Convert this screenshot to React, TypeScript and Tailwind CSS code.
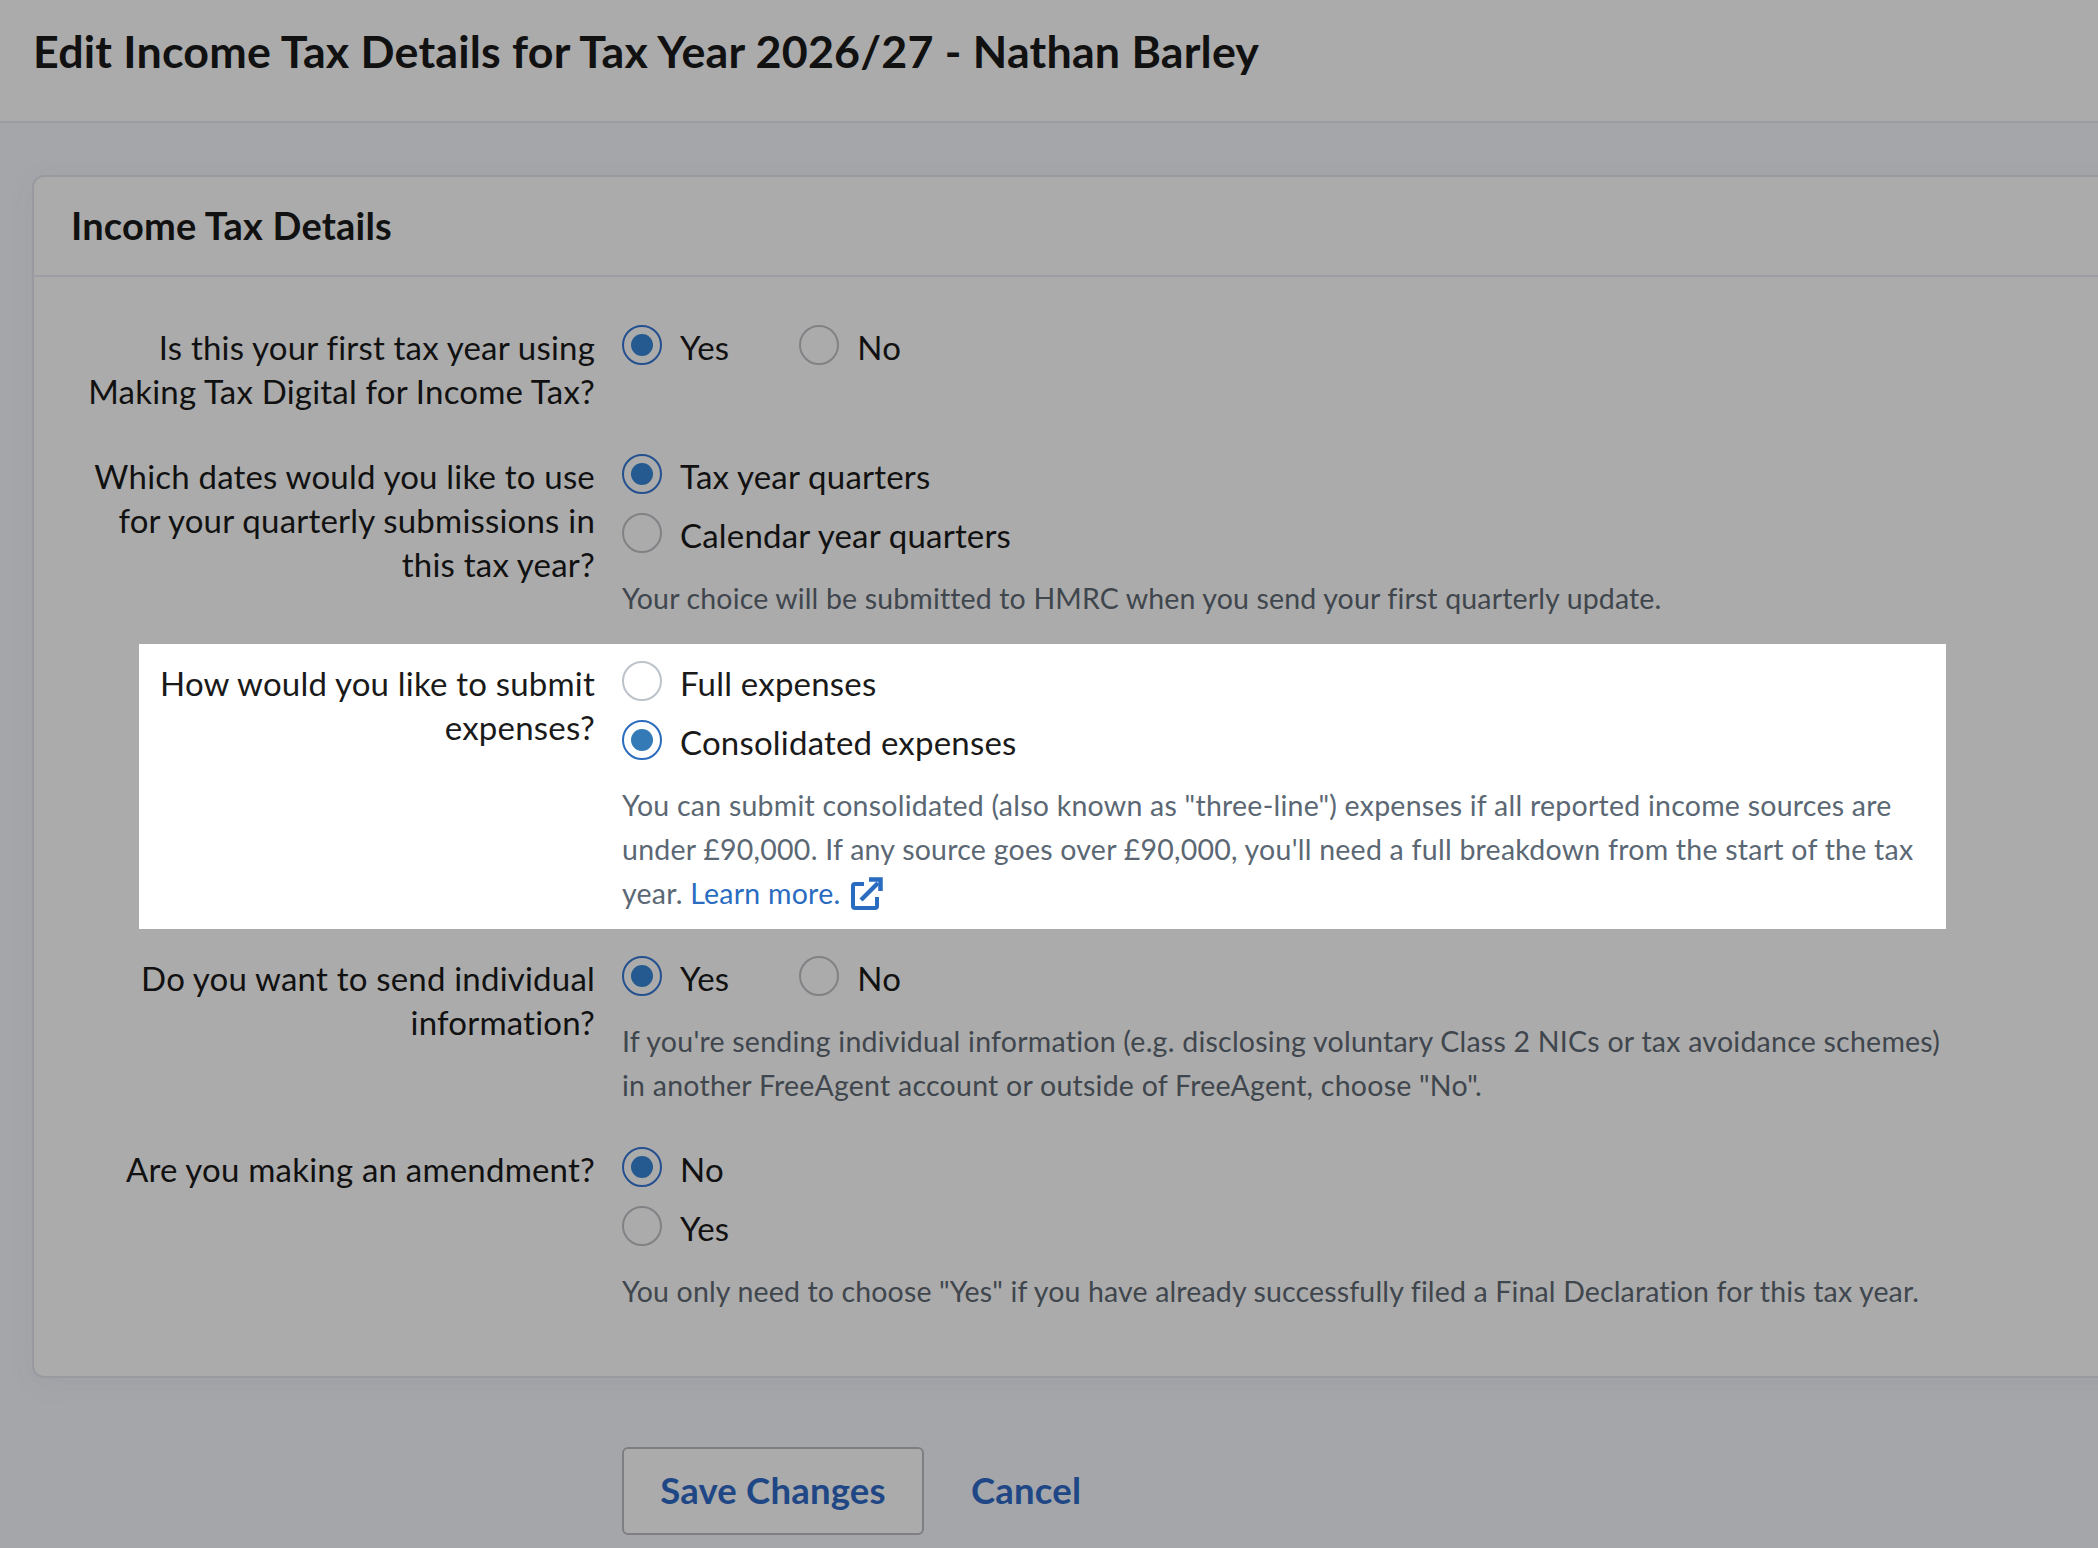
const font = "font-['Lato','Liberation_Sans',sans-serif]";

function Radio({ checked, lit, label, className = "" }: { checked?: boolean; lit?: boolean; label: string; className?: string }) {
  const ring = checked
    ? lit
      ? "border-[#2b6cbc]"
      : "border-[#24508f]"
    : lit
      ? "border-[#bcc3cb]"
      : "border-[#808285]";
  const dot = lit ? "bg-[#337ab7]" : "bg-[#245a90]";
  return (
    <label className={`flex h-[44px] items-center whitespace-nowrap ${className}`}>
      <span className={`-mt-[5px] flex size-[40px] shrink-0 items-center justify-center rounded-full border-[2.5px] ${ring} ${lit ? "bg-white" : ""}`}>
        {checked && <span className={`size-[22px] rounded-full ${dot}`} />}
      </span>
      <span className="ml-[18px]">{label}</span>
    </label>
  );
}

function Help({ lit, wide, children }: { lit?: boolean; wide?: boolean; children: React.ReactNode }) {
  return (
    <p className={`whitespace-nowrap text-[28.5px] ${wide ? "tracking-[0.24px]" : "tracking-[0.15px]"} ${lit ? "text-[#5b6874]" : "text-[#3f464d]"}`}>
      {children}
    </p>
  );
}

function Row({ label, lit, className = "", children }: { label: React.ReactNode; lit?: boolean; className?: string; children: React.ReactNode }) {
  return (
    <div className={`ml-[105px] flex w-[1807px] ${lit ? "bg-white text-[#1a1a1a]" : ""} ${className}`}>
      <div className="flex w-[456px] shrink-0 justify-end">
        <div className="shrink-0 whitespace-nowrap text-right">{label}</div>
      </div>
      <div className="ml-[27px]">{children}</div>
    </div>
  );
}

function ExternalIcon() {
  return (
    <svg viewBox="0 0 32 33" className="ml-[11px] inline-block h-[33px] w-[32px] align-[-6px]" fill="none" stroke="#2a6cc0" strokeWidth="4">
      <path d="M13 7H4a2 2 0 0 0-2 2v20a2 2 0 0 0 2 2h20a2 2 0 0 0 2-2v-9" />
      <path d="M10 23 27 6" strokeWidth="4.5" />
      <path d="M18 2.5h11.5V14" strokeWidth="4.5" />
    </svg>
  );
}

export default function App() {
  return (
    <div className={`h-[1548px] w-[2098px] overflow-hidden bg-[#a4a6aa] text-[33px] leading-[44px] tracking-[0.2px] text-[#111] ${font}`}>
      <header className="flex h-[123px] items-start border-b-2 border-[#9a9ca3] bg-[#ababab] pl-[33px] pt-[21px]">
        <h1 className="text-[44.8px] font-bold leading-[60px] text-[#111]">Edit Income Tax Details for Tax Year 2026/27 - Nathan Barley</h1>
      </header>

      <main className="pl-[32px] pt-[52px]">
        <section className="w-[2200px] rounded-[12px] border-2 border-[#989aa0] bg-[#ababab] pb-[63px] shadow-[0_6px_30px_rgba(80,90,110,0.06)]">
          <div className="flex h-[100px] items-center border-b-2 border-[#9c9ea3] pl-[37px]">
            <h2 className="-mt-[2px] text-[38px] font-bold text-[#111]">Income Tax Details</h2>
          </div>

          <Row className="mt-[48px]" label={<>Is this your first tax year using<br />Making Tax Digital for Income Tax?</>}>
            <div className="flex">
              <Radio checked label="Yes" className="mr-[70px]" />
              <Radio label="No" />
            </div>
          </Row>

          <Row className="mt-[41px]" label={<>Which dates would you like to use<br />for your quarterly submissions in<br />this tax year?</>}>
            <Radio checked label="Tax year quarters" />
            <Radio label="Calendar year quarters" className="mt-[15px]" />
            <div className="mt-[19px]">
              <Help>Your choice will be submitted to HMRC when you send your first quarterly update.</Help>
            </div>
          </Row>

          <Row lit className="mt-[24px] pb-[14px] pt-[17px]" label={<>How would you like to submit<br />expenses?</>}>
            <Radio lit label="Full expenses" />
            <Radio lit checked label="Consolidated expenses" className="mt-[15px]" />
            <div className="mt-[19px]">
              <Help lit wide>
                You can submit consolidated (also known as "three-line") expenses if all reported income sources are<br />
                under £90,000. If any source goes over £90,000, you'll need a full breakdown from the start of the tax<br />
                year. <a className="text-[#2a6cc0]">Learn more.<ExternalIcon /></a>
              </Help>
            </div>
          </Row>

          <Row className="mt-[27px]" label={<>Do you want to send individual<br />information?</>}>
            <div className="flex">
              <Radio checked label="Yes" className="mr-[70px]" />
              <Radio label="No" />
            </div>
            <div className="mt-[19px]">
              <Help wide>
                If you're sending individual information (e.g. disclosing voluntary Class 2 NICs or tax avoidance schemes)<br />
                in another FreeAgent account or outside of FreeAgent, choose "No".
              </Help>
            </div>
          </Row>

          <Row className="mt-[40px]" label="Are you making an amendment?">
            <Radio checked label="No" />
            <Radio label="Yes" className="mt-[15px]" />
            <div className="mt-[19px]">
              <Help>You only need to choose "Yes" if you have already successfully filed a Final Declaration for this tax year.</Help>
            </div>
          </Row>
        </section>

        <div className="ml-[590px] mt-[69px] flex items-center">
          <button className="h-[88px] w-[302px] rounded-[6px] border-2 border-[#7d7f82] bg-[#ababab] pb-[3px] text-[36.5px] font-bold text-[#1f4785]">Save Changes</button>
          <a className="-mt-[2px] ml-[47px] text-[36.5px] font-bold text-[#1f4785]">Cancel</a>
        </div>
      </main>
    </div>
  );
}
